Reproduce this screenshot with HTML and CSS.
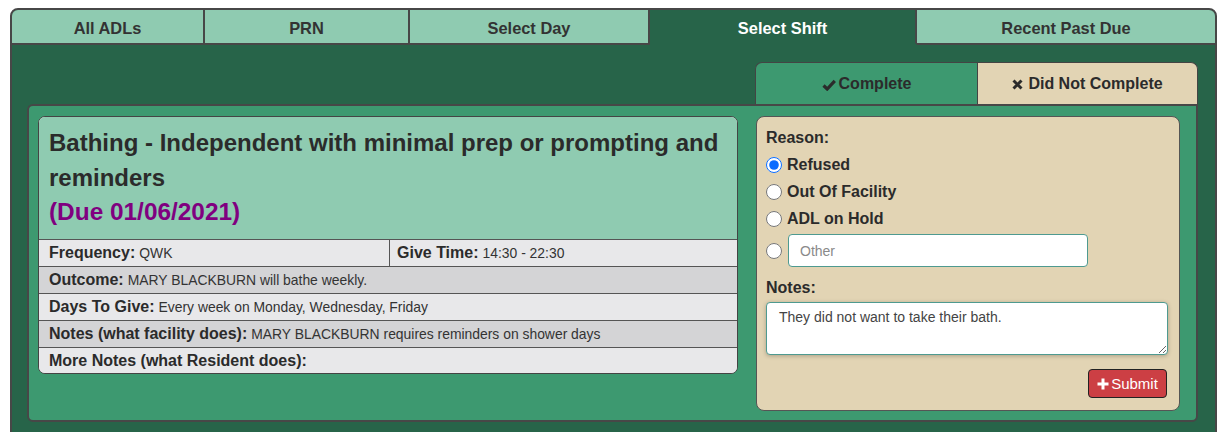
FILE: index.html
```html
<!DOCTYPE html>
<html>
<head>
<meta charset="utf-8">
<link rel="stylesheet" href="styles.css">
</head>
<body>
<div class="frame">
  <div class="tabs">
    <div class="tab t1">All ADLs</div>
    <div class="tab t2">PRN</div>
    <div class="tab t3">Select Day</div>
    <div class="tab t4 active">Select Shift</div>
    <div class="tab t5">Recent Past Due</div>
  </div>
  <div class="body">
    <div class="subtabs">
      <div class="subtab green">
        <svg class="ico-check" viewBox="0 0 14 12" width="14" height="12"><path d="M1.5 6.5 L5.2 10 L12.8 1.8" fill="none" stroke="#2b2b2b" stroke-width="3.2" stroke-linejoin="miter"/></svg>Complete
      </div>
      <div class="subtab beige">
        <svg class="ico-x" viewBox="0 0 11 11" width="11" height="11"><path d="M1.5 1.5 L9.5 9.5 M9.5 1.5 L1.5 9.5" fill="none" stroke="#2b2b2b" stroke-width="3"/></svg>Did Not Complete
      </div>
    </div>
    <div class="panel">
      <div class="card">
        <div class="card-head">
          <div class="title">Bathing - Independent with minimal prep or prompting and reminders</div>
          <div class="due">(Due 01/06/2021)</div>
        </div>
        <div class="row light split">
          <div class="cell"><span class="lbl">Frequency:</span> <span class="val">QWK</span></div>
          <div class="cell"><span class="lbl">Give Time:</span> <span class="val">14:30 - 22:30</span></div>
        </div>
        <div class="row dark"><div class="cell"><span class="lbl">Outcome:</span> <span class="val">MARY BLACKBURN will bathe weekly.</span></div></div>
        <div class="row light"><div class="cell"><span class="lbl">Days To Give:</span> <span class="val">Every week on Monday, Wednesday, Friday</span></div></div>
        <div class="row dark"><div class="cell"><span class="lbl">Notes (what facility does):</span> <span class="val">MARY BLACKBURN requires reminders on shower days</span></div></div>
        <div class="row light last"><div class="cell"><span class="lbl">More Notes (what Resident does):</span></div></div>
      </div>
      <div class="form">
        <div class="flabel">Reason:</div>
        <label class="opt first"><input type="radio" name="r" checked><span>Refused</span></label>
        <label class="opt"><input type="radio" name="r"><span>Out Of Facility</span></label>
        <label class="opt"><input type="radio" name="r"><span>ADL on Hold</span></label>
        <div class="opt other"><input type="radio" name="r"><input class="otherin" type="text" placeholder="Other"></div>
        <div class="flabel notes">Notes:</div>
        <textarea class="ta">They did not want to take their bath.</textarea>
        <div class="actions">
          <button class="submit"><svg viewBox="0 0 12 12" width="12" height="12"><path d="M6 0.5 V11.5 M0.5 6 H11.5" stroke="#fff" stroke-width="3" fill="none"/></svg>Submit</button>
        </div>
      </div>
    </div>
  </div>
</div>
</body>
</html>
```

FILE: styles.css
```css
* { box-sizing: border-box; }
html, body { margin: 0; padding: 0; background: #fff; }
body { font-family: "Liberation Sans", Arial, Helvetica, sans-serif; color: #2b2b2b; }

.frame {
  margin: 8px 0 0 10px;
  width: 1207px;
  border: 2px solid #474747;
  border-radius: 8px 8px 0 0;
  background: #276449;
  overflow: hidden;
}

.tabs { display: flex; height: 35px; }
.tab {
  height: 35px;
  background: #8fcbb1;
  border-right: 2px solid #474747;
  border-bottom: 2px solid #474747;
  font-weight: bold;
  font-size: 16.4px;
  color: #333;
  display: flex;
  align-items: center;
  justify-content: center;
  padding-top: 3px;
}
.t1 { width: 193px; }
.t2 { width: 205px; }
.t3 { width: 240px; }
.t4 { width: 267px; }
.t5 { flex: 1; border-right: none; }
.tab.active { background: #276449; color: #fff; border-bottom-color: #276449; }

.body { padding: 17px 17px 10px 15px; }

.subtabs { display: flex; justify-content: flex-end; height: 42px; }
.subtab {
  width: 222px;
  border-top: 1px solid #444;
  border-left: 1px solid #444;
  font-weight: bold;
  font-size: 16px;
  color: #2b2b2b;
  display: flex;
  align-items: center;
  justify-content: center;
  gap: 3px;
  padding-top: 1px;
}
.subtab.green { background: #3d9970; border-radius: 7px 0 0 0; }
.subtab.beige { background: #e2d4b4; border-radius: 0 7px 0 0; border-right: 1px solid #444; width: 221px; }
.ico-check { margin-top: 1px; }
.ico-x { margin-right: 2px; }

.panel {
  background: #3d9970;
  border: 2px solid #474747;
  border-radius: 6px 0 6px 6px;
  padding: 10px 15px 9px 9px;
  display: grid;
  grid-template-columns: 700px 424px;
  column-gap: 18px;
  align-items: start;
}

.card {
  border: 1px solid #444;
  border-radius: 7px;
  overflow: hidden;
  background: #e8e8ea;
}
.card-head {
  background: #8fcbb1;
  padding: 9px 10px 10px 10px;
}
.title { font-size: 24px; font-weight: bold; line-height: 34.5px; color: #2b2b2b; }
.due { font-size: 24.4px; font-weight: bold; line-height: 34px; color: #800080; }

.row { display: flex; border-top: 1px solid #555; height: 27px; }
.row.last { height: 26px; }
.row.light { background: #e8e8ea; }
.row.dark { background: #d4d4d6; }
.cell { flex: 1; padding: 0 10px; display: flex; align-items: center; gap: 4px; white-space: nowrap; }
.split .cell:first-child { border-right: 1px solid #555; }
.split .cell + .cell { padding-left: 7px; }
.lbl { font-weight: bold; font-size: 16px; color: #2b2b2b; }
.val { font-size: 13.9px; color: #333; }

.form {
  background: #e2d4b4;
  border: 1px solid #555;
  border-radius: 8px;
  padding: 10px 12px 12px 9px;
  display: flex;
  flex-direction: column;
}
.flabel { font-weight: bold; font-size: 16px; line-height: 20px; height: 20px; color: #2b2b2b; padding-top: 1px; }
.opt { display: flex; align-items: center; height: 27px; gap: 5px; font-weight: bold; font-size: 16px; color: #2b2b2b; }
.opt.first { margin-top: 4px; }
.opt input[type=radio] { margin: 0; width: 16px; height: 16px; accent-color: #0a6cff; }
.opt.other { height: 37px; gap: 6px; }
.otherin {
  width: 300px;
  height: 33px;
  border: 1px solid #4e9a90;
  border-radius: 4px;
  padding: 0 11px;
  font-family: "Liberation Sans", Arial, sans-serif;
  font-size: 14px;
  background: #fff;
  outline: none;
}
.otherin::placeholder { color: #8a8a8a; }
.flabel.notes { margin-top: 8px; }
.ta {
  margin-top: 5px;
  width: 402px;
  height: 53px;
  border: 1px solid #4e9a90;
  border-radius: 4px;
  padding: 6px 12px;
  font-family: "Liberation Sans", Arial, sans-serif;
  font-size: 14px;
  color: #444;
  background: #fff;
  box-shadow: 0 1px 4px rgba(0,0,0,0.25);
  resize: vertical;
  outline: none;
}
.actions { display: flex; justify-content: flex-end; margin-top: 14px; }
.submit {
  height: 29px;
  width: 79px;
  background: #cc3f44;
  border: 1px solid #222;
  border-radius: 4px;
  color: #fff;
  font-family: "Liberation Sans", Arial, sans-serif;
  font-size: 15px;
  display: flex;
  align-items: center;
  justify-content: center;
  gap: 2px;
  padding: 0;
}
```
